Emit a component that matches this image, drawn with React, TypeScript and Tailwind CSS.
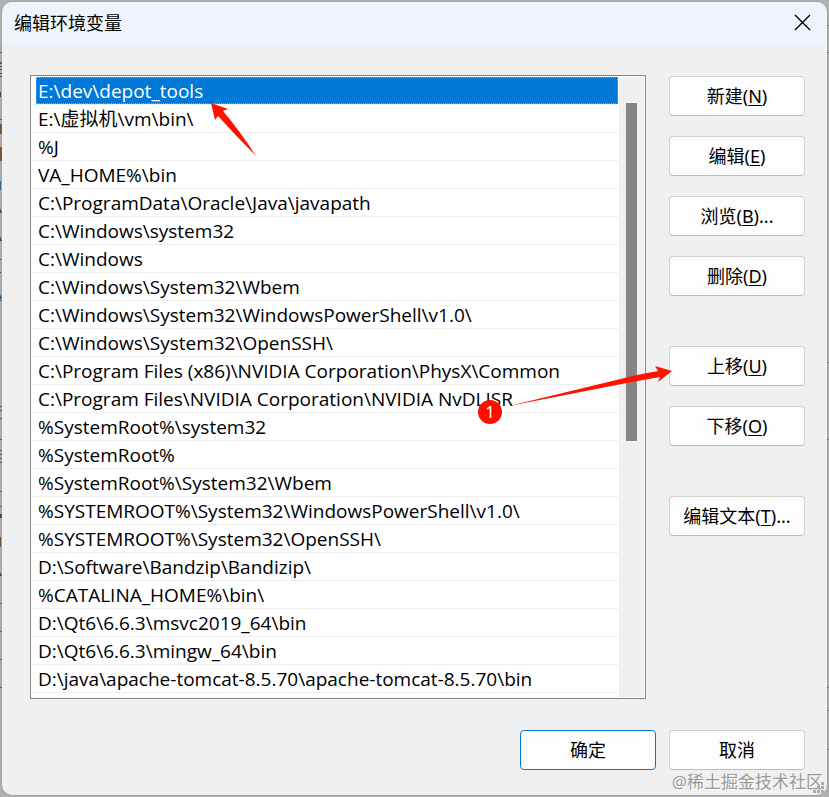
import { useState } from "react";
import type { ReactNode } from "react";

const entries = [
  "E:\\dev\\depot_tools",
  "E:\\虚拟机\\vm\\bin\\",
  "%J",
  "VA_HOME%\\bin",
  "C:\\ProgramData\\Oracle\\Java\\javapath",
  "C:\\Windows\\system32",
  "C:\\Windows",
  "C:\\Windows\\System32\\Wbem",
  "C:\\Windows\\System32\\WindowsPowerShell\\v1.0\\",
  "C:\\Windows\\System32\\OpenSSH\\",
  "C:\\Program Files (x86)\\NVIDIA Corporation\\PhysX\\Common",
  "C:\\Program Files\\NVIDIA Corporation\\NVIDIA NvDLISR",
  "%SystemRoot%\\system32",
  "%SystemRoot%",
  "%SystemRoot%\\System32\\Wbem",
  "%SYSTEMROOT%\\System32\\WindowsPowerShell\\v1.0\\",
  "%SYSTEMROOT%\\System32\\OpenSSH\\",
  "D:\\Software\\Bandzip\\Bandizip\\",
  "%CATALINA_HOME%\\bin\\",
  "D:\\Qt6\\6.6.3\\msvc2019_64\\bin",
  "D:\\Qt6\\6.6.3\\mingw_64\\bin",
  "D:\\java\\apache-tomcat-8.5.70\\apache-tomcat-8.5.70\\bin",
];

function PushButton({ children, primary = false }: { children: ReactNode; primary?: boolean }) {
  return (
    <button
      type="button"
      className={`h-10 w-[136px] shrink-0 rounded border bg-[#fdfdfd] text-lg leading-6 text-black ${
        primary ? "border-[#0078d4]" : "border-[#d0d0d0] border-b-[#bcbcbc]"
      }`}
    >
      {children}
    </button>
  );
}

function Shortcut({ label, letter, more = "" }: { label: string; letter: string; more?: string }) {
  return (
    <>
      {label}(<span className="underline decoration-1 underline-offset-2">{letter}</span>){more}
    </>
  );
}

function PathList() {
  const [selected, setSelected] = useState(0);
  return (
    <div className="relative flex min-w-0 flex-1 border border-[#828790] bg-white p-px">
      <ul role="listbox" aria-label="环境变量" className="min-w-0 flex-1 pb-1">
        {entries.map((entry, i) => (
          <li
            key={entry}
            role="option"
            aria-selected={i === selected}
            onClick={() => setSelected(i)}
            className="h-7 border-b border-[#ededed] pl-1"
          >
            <div
              className={`h-[27px] truncate pl-0.5 font-['Open_Sans','Noto_Sans_CJK_SC',sans-serif] text-[19px] leading-7 ${
                i === selected
                  ? "bg-[#0078d7] text-white outline-1 -outline-offset-1 outline-dotted outline-[#ff8728]"
                  : "text-black"
              }`}
            >
              {entry}
            </div>
          </li>
        ))}
      </ul>
      <div className="ml-px flex w-[25px] justify-center bg-[#f0f0f0] pt-[26px]">
        <div className="h-[338px] w-[11px] bg-[#858585]" />
      </div>
      <svg
        className="pointer-events-none absolute left-[180px] top-[27px]"
        width="46"
        height="54"
        viewBox="0 0 46 54"
        aria-hidden="true"
      >
        <path d="M0 0 17 6 12 8Q29 28 45 53Q25 33 7 13L4 17Z" fill="#ff1300" />
      </svg>
      <svg
        className="pointer-events-none absolute -right-[27px] top-[287px] z-10"
        width="164"
        height="46"
        viewBox="0 0 164 46"
        aria-hidden="true"
      >
        <path d="M164 8 147 3 150 8 129 12 1 43 129 18 152 14 150 19Z" fill="#ff1300" />
      </svg>
      <span className="absolute right-[143px] top-[324px] size-6 rounded-full bg-[#ff0f00] text-center text-base leading-6 text-white">
        1
      </span>
    </div>
  );
}

function Backdrop() {
  return (
    <svg className="absolute inset-0 size-full" aria-hidden="true">
      <g fill="#555">
        <path d="M0 52h2v1H0zM0 62h2v2H0zM0 66h2v1H0zM0 69h2v1H0zM0 73h2v1H0zM0 76h2v1H0z" />
        <path d="M0 406h2v1H0zM0 410h2v1H0zM0 418h2v1H0zM0 439h2v1H0zM0 450h2v1H0zM0 454h2v1H0zM0 458h2v1H0zM0 462h2v1H0zM0 491h2v1H0zM0 687h2v1H0z" />
      </g>
      <path d="M0 92h1v5H0zM0 208l2 5H0zM0 236l2 5H0zM0 259h1v1H0zM0 272h1v1H0zM0 294l2 5H0zM0 514h2v4H0zM0 572l2 4H0z" fill="#29466f" />
      <path d="M0 119h2v1H0zM0 124h2v10H0zM0 147h2v14H0zM0 537h1v10H0z" fill="#76502e" />
      <path d="M0 181h1v9H0zM0 300h2v1H0zM0 506h2v1H0zM0 603h2v1H0zM0 631h2v1H0zM0 659h2v1H0z" fill="#326a99" />
      <svg x="100%" overflow="visible">
        <path d="M-2 25h2v1h-2zM-2 52h2v1h-2zM-2 362h2v1h-2zM-2 439h2v1h-2zM-2 687h2v1h-2zM-2 710h2v1h-2zM-2 749h2v1h-2z" fill="#777" />
      </svg>
    </svg>
  );
}

function ResizeGrip() {
  return (
    <svg className="absolute bottom-0.5 right-[3px]" width="11" height="11" viewBox="0 0 11 11" aria-hidden="true">
      <path d="M8 0h3v3H8zM4 4h3v3H4zM8 4h3v3H8zM0 8h3v3H0zM4 8h3v3H4zM8 8h3v3H8z" fill="#aaa" />
    </svg>
  );
}

export default function App() {
  return (
    <div className="relative min-h-screen bg-[#b0b0b0] p-0.5 font-['Noto_Sans','Noto_Sans_CJK_SC',sans-serif]">
      <Backdrop />
      <main
        role="dialog"
        aria-labelledby="dialog-title"
        className="relative flex min-h-[calc(100vh-4px)] flex-col overflow-hidden rounded-[10px] bg-[#f0f0f0] shadow-[0_0_2px_#888]"
      >
        <header className="flex h-[43px] items-center justify-between bg-[#eff3fb] pb-0.5 pl-3 pr-4">
          <h1 id="dialog-title" className="text-lg leading-6 text-black">
            编辑环境变量
          </h1>
          <button type="button" aria-label="关闭" className="text-black">
            <svg width="17" height="17" viewBox="0 0 17 17" fill="none" stroke="currentColor" strokeWidth="1.4">
              <path d="M1 1 16 16M16 1 1 16" />
            </svg>
          </button>
        </header>

        <div className="flex gap-[23px] pl-7 pr-[22px] pt-[30px]">
          <PathList />
          <div className="flex flex-col gap-5 pt-px">
            <PushButton><Shortcut label="新建" letter="N" /></PushButton>
            <PushButton><Shortcut label="编辑" letter="E" /></PushButton>
            <PushButton><Shortcut label="浏览" letter="B" more="..." /></PushButton>
            <PushButton><Shortcut label="删除" letter="D" /></PushButton>
            <div className="flex flex-col gap-5 py-[30px]">
              <PushButton><Shortcut label="上移" letter="U" /></PushButton>
              <PushButton><Shortcut label="下移" letter="O" /></PushButton>
            </div>
            <PushButton><Shortcut label="编辑文本" letter="T" more="..." /></PushButton>
          </div>
        </div>

        <footer className="flex justify-end gap-[13px] pr-[22px] pt-[31px]">
          <PushButton primary>确定</PushButton>
          <PushButton>取消</PushButton>
        </footer>

        <p className="absolute bottom-px right-1 text-[17px] leading-6 text-[#999] [text-shadow:1px_1px_0_#fff]">
          @稀土掘金技术社区
        </p>
        <ResizeGrip />
      </main>
    </div>
  );
}
